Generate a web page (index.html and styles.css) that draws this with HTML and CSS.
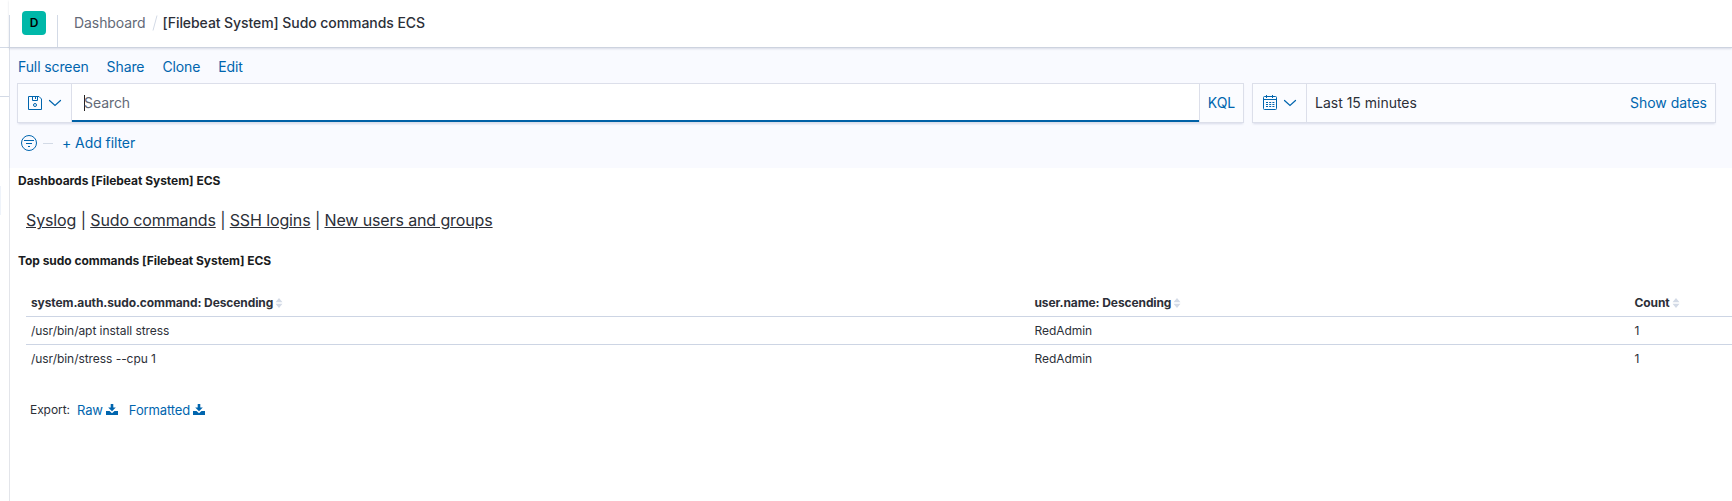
FILE: index.html
```html
<!DOCTYPE html>
<html lang="en">
<head>
<meta charset="utf-8">
<title>[Filebeat System] Sudo commands ECS</title>
<link rel="stylesheet" href="styles.css">
</head>
<body>
<div class="app">
  <aside class="rail">
    <div class="rail-top"></div>
    <div class="rail-mid"></div>
    <div class="rail-item"></div>
  </aside>
  <div class="page">
    <header class="header">
      <div class="space"><span class="avatar">D</span></div>
      <nav class="crumbs">
        <a class="crumb">Dashboard</a>
        <svg class="slash" width="6" height="16" viewBox="0 0 6 16"><path d="M5 .5 1 15.5" stroke="#d3dae6" fill="none"/></svg>
        <span class="current">[Filebeat System] Sudo commands ECS</span>
      </nav>
    </header>
    <section class="top">
      <nav class="menu"><a>Full screen</a><a>Share</a><a>Clone</a><a>Edit</a></nav>
      <div class="query">
        <div class="box search">
          <div class="prepend">
            <svg width="16" height="16" viewBox="0 0 16 16" fill="none" stroke="#0065ae"><path d="M1.500 1.500h10.500l2.500 2.500v10.500h-13zM5.500 1.500v4h5v-4M8.500 2v2"/><circle cx="8" cy="10" r="1.500"/></svg>
            <svg width="16" height="16" viewBox="0 0 16 16" fill="none" stroke="#0065ae" stroke-width="1.2" stroke-linecap="round"><path d="m2.500 5.500 5.500 5 5.500-5"/></svg>
          </div>
          <div class="input"><span class="caret"></span>Search</div>
          <div class="kql">KQL</div>
        </div>
        <div class="box date">
          <div class="prepend">
            <svg width="16" height="16" viewBox="0 0 16 16" fill="none" stroke="#0065ae"><rect x="1.500" y="1.500" width="13" height="13" rx="1"/><path d="M1.500 4.500h13M4.500 0v3M10.500 0v3"/><path d="M4 7.500h8.500M4 9.500h8.500M4 11.500h8.500" stroke-dasharray="2 1.200"/></svg>
            <svg width="16" height="16" viewBox="0 0 16 16" fill="none" stroke="#0065ae" stroke-width="1.2" stroke-linecap="round"><path d="m2.500 5.500 5.500 5 5.500-5"/></svg>
          </div>
          <span class="range">Last 15 minutes</span>
          <a class="show">Show dates</a>
        </div>
      </div>
      <div class="filters">
        <svg width="16" height="16" viewBox="0 0 16 16" fill="none" stroke="#0065ae"><circle cx="8" cy="8" r="7.500"/><path d="M3 5.500h10M5 8.500h6M7 11.500h2"/></svg>
        <span class="dash"></span>
        <a>+ Add filter</a>
      </div>
    </section>
    <main>
      <h2 class="title">Dashboards [Filebeat System] ECS</h2>
      <p class="links"><a>Syslog</a> | <a>Sudo commands</a> | <a>SSH logins</a> | <a>New users and groups</a></p>
      <h2 class="title">Top sudo commands [Filebeat System] ECS</h2>
      <div class="table">
        <div class="row head">
          <span>system.auth.sudo.command: Descending<svg class="sort" width="8" height="10" viewBox="0 0 8 10"><path d="M.5 4.200 4 0l3.500 4.200zM.5 5.800h7L4 10z"/></svg></span>
          <span>user.name: Descending<svg class="sort" width="8" height="10" viewBox="0 0 8 10"><path d="M.5 4.200 4 0l3.500 4.200zM.5 5.800h7L4 10z"/></svg></span>
          <span>Count<svg class="sort" width="8" height="10" viewBox="0 0 8 10"><path d="M.5 4.200 4 0l3.500 4.200zM.5 5.800h7L4 10z"/></svg></span>
        </div>
        <div class="row"><span>/usr/bin/apt install stress</span><span>RedAdmin</span><span>1</span></div>
        <div class="row"><span>/usr/bin/stress --cpu 1</span><span>RedAdmin</span><span>1</span></div>
      </div>
      <div class="export">
        <span class="label">Export:</span>
        <a class="raw">Raw<svg width="12" height="11" viewBox="0 0 12 11" fill="#0065ae"><path d="M4.700 0h2.600v3.500h2.500L6 7.300 2.200 3.500h2.500zM0 7h3.500L6 9.300 8.500 7H12v4H0z"/></svg></a>
        <a>Formatted<svg width="12" height="11" viewBox="0 0 12 11" fill="#0065ae"><path d="M4.700 0h2.600v3.500h2.500L6 7.300 2.200 3.500h2.500zM0 7h3.500L6 9.300 8.500 7H12v4H0z"/></svg></a>
      </div>
    </main>
  </div>
</div>
</body>
</html>
```
FILE: styles.css
```css
* { box-sizing: border-box; }
body { margin: 0; overflow: hidden; background: #fff; color: #2c2f38; font: 14px/20px Inter, "Liberation Sans", sans-serif; letter-spacing: -.07px; }
svg { display: block; flex: none; }
a { color: #0065ae; }
.app { display: flex; height: 501px; }
.rail { width: 9px; flex: none; }
.rail-top { height: 48px; border-bottom: 1px solid #d3dae6; }
.rail-mid { height: 49px; border-bottom: 1px solid #d3dae6; }
.rail-item { width: 1px; height: 29px; margin-top: 89px; background: #eef3fa; }
.page { flex: 1; min-width: 0; display: flex; flex-direction: column; }
.header { height: 48px; display: flex; border-bottom: 1px solid #cdd3df; position: relative; box-shadow: 0 1px 2px rgba(90,100,130,.2); }
.space { width: 49px; height: 32px; margin-top: 15px; border: solid #d3dae6; border-width: 0 1px; padding-left: 12px; }
.avatar { display: block; width: 24px; height: 24px; margin-top: -4px; border-radius: 4px; background: #00b8a9; color: #000; font-size: 12px; font-weight: 600; line-height: 24px; text-align: center; }
.crumbs { display: flex; align-items: center; height: 46px; padding-left: 16px; }
.crumb { color: #636a77; }
.slash { margin: 0 5px 0 6px; }
.current { font-weight: 500; color: #2c2f38; }
.top { height: 120px; padding: 8px 16px 0 7px; background: #f9faff; border-left: 1px solid #dde1ea; }
.menu { display: flex; gap: 18px; height: 27px; padding-left: 1px; line-height: 21px; letter-spacing: -.11px; }
.query { display: flex; gap: 8px; }
.box { height: 40px; display: flex; align-items: center; background: #fbfcff; border: 1px solid #dcdfea; box-shadow: 0 2px 2px -1px rgba(90,100,150,.2); }
.search { width: 1227px; }
.date { flex: 1; }
.prepend { height: 38px; width: 54px; display: flex; align-items: center; gap: 4px; padding-left: 9px; border-right: 1px solid #dcdfea; }
.input { flex: 1; height: 38px; display: flex; align-items: center; padding: 2px 0 0 12px; background: #fff; color: #636a77; border-bottom: 2px solid #0061a6; }
.caret { width: 1px; height: 16px; background: #222; margin-right: -1px; }
.kql { width: 44px; height: 38px; line-height: 38px; text-align: center; color: #0065ae; border-left: 1px solid #dcdfea; }
.range { flex: 1; padding-left: 8px; letter-spacing: -.01px; }
.show { padding-right: 8px; letter-spacing: -.02px; }
.filters { display: flex; align-items: center; height: 40px; padding-left: 4px; }
.dash { width: 10px; height: 1px; background: #d3dae6; margin: 0 9px 0 6px; }
main { flex: 1; border-left: 1px solid #e3e5ea; padding-left: 8px; }
.title { margin: 0; height: 25px; font-size: 12px; line-height: 26px; font-weight: 700; letter-spacing: -.04px; color: #1a1c21; }
.links { margin: 0; height: 55px; padding: 15px 0 0 8px; font-size: 16px; line-height: 24px; letter-spacing: -.12px; }
.links a { color: #2c2f38; text-decoration: underline; }
.table { margin: 16px 0 0 8px; font-size: 12px; letter-spacing: -.05px; }
.row { height: 28px; display: grid; grid-template-columns: 1003.5px 600px 1fr; align-items: center; padding-left: 5px; border-bottom: 1px solid #cdd5e4; }
.row:last-child { border: 0; }
.row span { display: flex; align-items: center; }
.head { font-weight: 700; letter-spacing: -.1px; }
.sort { margin-left: 2px; fill: #d3dae6; }
.export { display: flex; align-items: center; margin-top: 27px; padding-left: 12px; font-size: 12px; }
.export a { display: flex; align-items: center; gap: 3px; font-size: 13px; letter-spacing: -.13px; }
.export svg { margin-top: -2px; }
.label { width: 47px; }
.export .raw { margin-right: 11px; }
```
